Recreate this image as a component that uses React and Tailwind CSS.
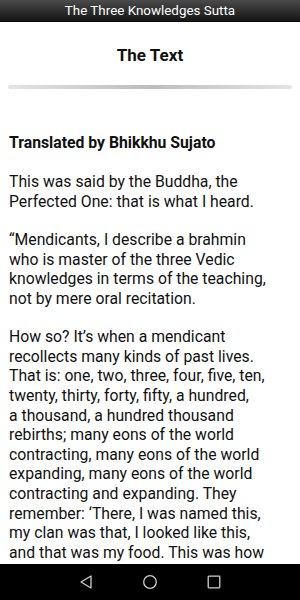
import React from 'react';

// lines broken as the reference shows them
const paragraphs = [
  ['This was said by the Buddha, the', 'Perfected One: that is what I heard.'],
  [
    '“Mendicants, I describe a brahmin',
    'who is master of the three Vedic',
    'knowledges in terms of the teaching,',
    'not by mere oral recitation.',
  ],
  [
    'How so? It’s when a mendicant',
    'recollects many kinds of past lives.',
    'That is: one, two, three, four, five, ten,',
    'twenty, thirty, forty, fifty, a hundred,',
    'a thousand, a hundred thousand',
    'rebirths; many eons of the world',
    'contracting, many eons of the world',
    'expanding, many eons of the world',
    'contracting and expanding. They',
    'remember: ‘There, I was named this,',
    'my clan was that, I looked like this,',
    'and that was my food. This was how',
  ],
];

export default function App() {
  return (
    <div className="w-[300px] h-[600px] flex flex-col bg-white overflow-hidden font-['Roboto',sans-serif]">
      {/* title bar */}
      <div className="h-[22px] shrink-0 bg-gradient-to-b from-[#4b4b4b] to-[#161616] border-b border-[#0a0a0a] flex items-center justify-center">
        <span className="text-white text-[13.4px] leading-none">The Three Knowledges Sutta</span>
      </div>

      {/* content */}
      <div className="flex-1 overflow-hidden text-[#111]">
        <h1 className="text-center font-bold text-[17px] leading-none pt-[25px]">The Text</h1>
        <div className="mx-2 mt-[21px] h-[4px] rounded-full bg-gradient-to-r from-[#e4e4e4] via-[#bdbdbd] to-[#e4e4e4]" />

        <div className="px-[9px] pt-[44px] text-[15.75px] leading-[19.6px] whitespace-nowrap">
          <p className="font-bold mb-[19.5px]">Translated by Bhikkhu Sujato</p>
          {paragraphs.map((lines, i) => (
            <p key={i} className="mb-[18.8px]">
              {lines.map((l, j) => (
                <span key={j} className="block">{l}</span>
              ))}
            </p>
          ))}
        </div>
      </div>

      {/* nav bar */}
      <div className="h-[36px] shrink-0 bg-black flex items-center justify-center gap-[48px]">
        <svg width="16" height="16" viewBox="0 0 16 16" fill="none" stroke="#cfcfcf" strokeWidth="1.3">
          <path d="M13 2 L3 8 L13 14 Z" strokeLinejoin="round" />
        </svg>
        <svg width="16" height="16" viewBox="0 0 16 16" fill="none" stroke="#cfcfcf" strokeWidth="1.3">
          <circle cx="8" cy="8" r="6.3" />
        </svg>
        <svg width="16" height="16" viewBox="0 0 16 16" fill="none" stroke="#cfcfcf" strokeWidth="1.3">
          <rect x="2.2" y="2.2" width="11.6" height="11.6" rx="0.8" />
        </svg>
      </div>
    </div>
  );
}
